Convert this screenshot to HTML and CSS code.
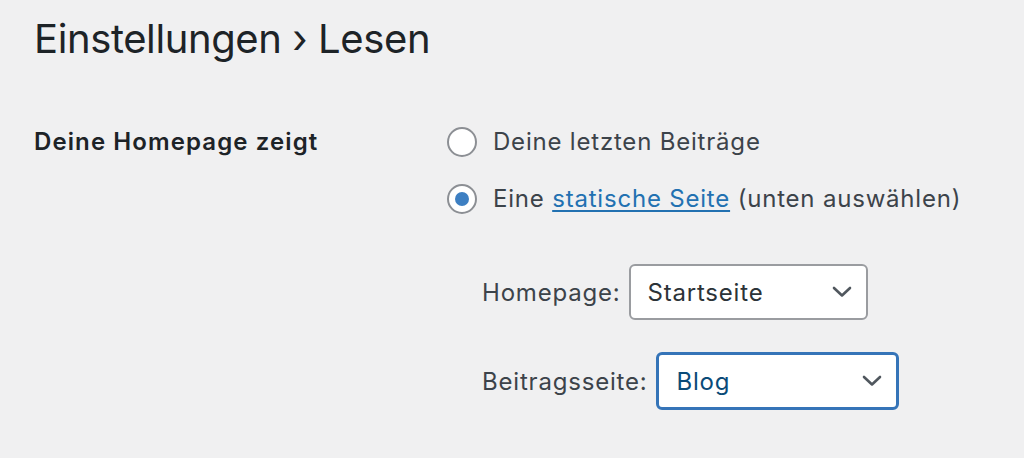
FILE: index.html
```html
<!DOCTYPE html>
<html lang="de">
<head>
  <meta charset="UTF-8" />
  <title>Einstellungen › Lesen</title>
  <link rel="stylesheet" href="styles.css">
</head>
<body>

  <div class="wrap">
    <h1>Einstellungen › Lesen</h1>

    <div class="form-row">
      <div class="row-label">Deine Homepage zeigt</div>

      <div class="row-field">
        <label class="radio-line">
          <input type="radio" name="show_on_front" value="posts">
          <span>Deine letzten Beiträge</span>
        </label>
        <label class="radio-line">
          <input type="radio" name="show_on_front" value="page" checked>
          <span>Eine <a href="#">statische Seite</a> (unten auswählen)</span>
        </label>

        <div class="page-selects">
          <div class="select-line">
            <span class="select-label">Homepage:</span>
            <div class="fake-select">
              <span>Startseite</span>
              <svg class="chevron" width="20" height="12" viewBox="0 0 20 12">
                <path d="M2 2 L10 9.5 L18 2" fill="none" stroke="#50575e" stroke-width="2.6" stroke-linecap="round" stroke-linejoin="round"/>
              </svg>
            </div>
          </div>
          <div class="select-line">
            <span class="select-label">Beitragsseite:</span>
            <div class="fake-select focused">
              <span>Blog</span>
              <svg class="chevron" width="20" height="12" viewBox="0 0 20 12">
                <path d="M2 2 L10 9.5 L18 2" fill="none" stroke="#50575e" stroke-width="2.6" stroke-linecap="round" stroke-linejoin="round"/>
              </svg>
            </div>
          </div>
        </div>
      </div>
    </div>
  </div>

</body>
</html>
```

FILE: styles.css
```css
body {
  margin: 0;
  background: #f0f0f1;
  color: #3c434a;
  font-family: Inter, "Noto Sans", sans-serif;
  font-size: 24px;
  letter-spacing: 0.8px;
}

.wrap {
  padding: 0 34px;
}

h1 {
  margin: 0;
  padding-top: 12px;
  font-size: 40px;
  font-weight: 400;
  line-height: 54px;
  color: #1d2327;
  letter-spacing: -0.4px;
}

.form-row {
  display: grid;
  grid-template-columns: 413px 1fr;
  margin-top: 47px;
}

.row-label {
  font-weight: 600;
  color: #1d2327;
  line-height: 57px;
  letter-spacing: 1.1px;
}

.radio-line {
  display: flex;
  align-items: center;
  gap: 16px;
  height: 57px;
}

.radio-line input {
  appearance: none;
  margin: 0;
  width: 30px;
  height: 30px;
  border: 2px solid #8c8f94;
  border-radius: 50%;
  background: #fff;
  display: flex;
  align-items: center;
  justify-content: center;
  box-sizing: border-box;
}

.radio-line input:checked::before {
  content: "";
  width: 14px;
  height: 14px;
  border-radius: 50%;
  background: #3d7fc2;
}

.radio-line a {
  color: #2271b1;
  text-decoration: underline;
  text-underline-offset: 3px;
}

.page-selects {
  padding-left: 35px;
  margin-top: 37px;
  display: flex;
  flex-direction: column;
  gap: 32px;
}

.select-line {
  display: flex;
  align-items: center;
  gap: 9px;
}

.fake-select {
  box-sizing: border-box;
  width: 239px;
  height: 56px;
  border: 2px solid #9a9ca0;
  border-radius: 6px;
  background: #fff;
  color: #2c3338;
  display: flex;
  align-items: center;
  justify-content: space-between;
  padding: 0 14px 0 16px;
}

.fake-select.focused {
  width: 243px;
  height: 58px;
  border: 3px solid #3574b8;
  color: #0a4b78;
  padding-left: 17px;
}
```
